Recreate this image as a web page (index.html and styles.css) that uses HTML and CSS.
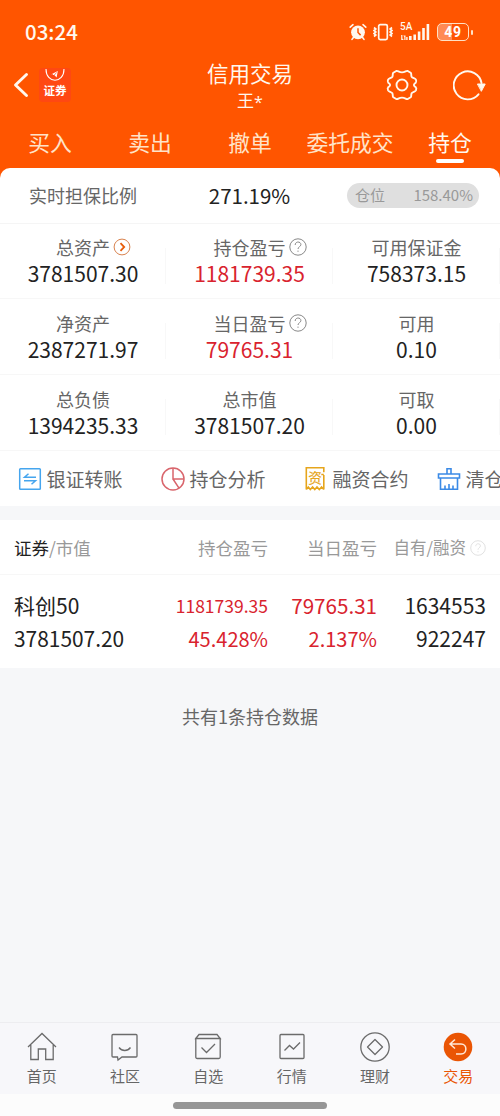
FILE: index.html
```html
<!DOCTYPE html>
<html lang="zh-CN">
<head>
<meta charset="utf-8">
<title>信用交易</title>
<link rel="stylesheet" href="styles.css">
</head>
<body>
<div class="app">
  <header class="top">
    <div class="status">
      <span class="clock">03:24</span>
      <div class="status-icons">
        <svg width="18" height="18" viewBox="0 0 18 18"><circle cx="9" cy="9.3" r="6.900" fill="#fff8ee"/><path d="M1.200 4.200 4 1.700M16.800 4.200 14 1.700M4.600 14.200l-1.600 2.200M13.400 14.200l1.600 2.200" stroke="#fff8ee" stroke-width="1.600" stroke-linecap="round"/><path d="M9 5.300v4.200l2.600 2.600" stroke="#ff5500" stroke-width="1.500" fill="none"/></svg>
        <svg class="vibrate" width="20" height="18" viewBox="0 0 20 18" fill="none" stroke="#fff8ee" stroke-width="1.700"><rect x="5.700" y="1.600" width="8.600" height="15" rx="1.500"/><path d="M1 4.500 2.800 6 1 7.500 2.800 9 1 10.500 2.800 12 1 13.500M19 4.500 17.200 6 19 7.500 17.200 9 19 10.500 17.200 12 19 13.500"/></svg>
        <div class="signal">
          <span class="net">5A</span>
          <svg width="30" height="18" viewBox="0 0 30 18" fill="#fff8ee"><path d="M9 13h2.600v4H9zM13.400 11.500H16v5.500h-2.600zM17.800 8.500h2.600V17h-2.600zM22.200 5h2.600v12h-2.600zM26.600 1h2.600v16h-2.600zM1.200 12h1.200v3.500l1.500 1.500H1.200zM5.500 17H4.300v-3l-1-1.500h2.200zM6.200 14h1.400v3H6.200z"/></svg>
        </div>
        <div class="battery"><span class="charge">49</span></div><i class="battery-tip"></i>
      </div>
    </div>
    <div class="titlebar">
      <div class="title-left">
        <svg width="16" height="26" viewBox="0 0 16 26" fill="none" stroke="#fff8ee" stroke-width="2.900" stroke-linecap="round" stroke-linejoin="round"><path d="M13.500 2.500 2.500 13l11 10.500"/></svg>
        <div class="brand">
          <svg width="20" height="13" viewBox="0 0 20 13" fill="none" stroke="#fff" stroke-width="1.100"><path d="M1 0c0 15 18 15 18 0"/><path d="M6.500 5.300 12.800 2l-1.200 6.500-1.800-2z" fill="#fff" stroke="none"/><path d="m8.300 7.200 3.400-3.800M7 5.200l3 2.600" stroke="#ff4316" stroke-width=".7"/></svg>
          <span class="brand-name">证券</span>
        </div>
      </div>
      <div class="title"><h1 class="title-main">信用交易</h1><span class="title-sub">王<span class="mask">*</span></span></div>
      <div class="title-right">
        <svg width="32" height="32" viewBox="0 0 32 32" fill="none" stroke="#fff8ee" stroke-width="1.900" stroke-linejoin="round"><path d="M10.300 2c1.600-.6 2.400 1.400 5.700 1.400S20.100 1.400 21.700 2l3 1.800c1 .8.200 2.500.9 3.900.9 1.600 3.600 1.500 4.300 3 .5 1.200.5 2.300 0 2.800-.5.800-2 1.200-2 2.500s1.500 1.700 2 2.500c.5.500.5 1.600 0 2.800-.7 1.500-3.400 1.400-4.300 3-.7 1.400.1 3.100-.9 3.900l-3 1.800c-1.600.6-2.400-1.400-5.700-1.400s-4.100 2-5.700 1.400l-3-1.800c-1-.8-.2-2.500-.9-3.900-.9-1.600-3.600-1.500-4.300-3-.5-1.200-.5-2.300 0-2.800.5-.8 2-1.200 2-2.500s-1.500-1.700-2-2.500c-.5-.5-.5-1.600 0-2.800.7-1.500 3.400-1.400 4.300-3 .7-1.400-.1-3.100.9-3.900z"/><circle cx="16" cy="16" r="5.500"/></svg>
        <svg width="34" height="32" viewBox="0 0 34 32" fill="none" stroke="#fff8ee" stroke-width="1.900" stroke-linecap="round"><path d="M25.500 25.300A14 14 0 1 1 28.500 14"/><path d="M24.800 15h7.400L28.500 22z" fill="#fff8ee" stroke-width="1" stroke-linejoin="round"/></svg>
      </div>
    </div>
    <nav class="tabs"><span class="tab">买入</span><span class="tab">卖出</span><span class="tab">撤单</span><span class="tab">委托成交</span><span class="tab tab-active">持仓</span></nav>
  </header>

  <section class="summary">
    <div class="ratio">
      <span class="ratio-label">实时担保比例</span>
      <span class="ratio-value">271.19%</span>
      <div class="position"><span class="position-text">仓位</span><span class="position-text">158.40%</span></div>
    </div>
    <div class="stats">
      <div class="stat"><div class="label">总资产<svg class="hint" width="18" height="18" viewBox="0 0 18 18" fill="none"><circle cx="9" cy="9" r="7.900" stroke="#d9834f"/><path d="m7.500 5.200 3.700 3.800-3.700 3.800" stroke="#e85d0a" stroke-width="1.800"/></svg></div><div class="value">3781507.30</div></div>
      <div class="stat"><div class="label">持仓盈亏<svg class="hint" width="18" height="18" viewBox="0 0 18 18" fill="none" stroke="#888"><circle cx="9" cy="9" r="8.200"/><path d="M6.200 7c0-4 5.700-3.800 5.700-.4C11.900 8.700 9 8.700 9 11M9 12.600v1.200"/></svg></div><div class="value up">1181739.35</div></div>
      <div class="stat"><div class="label">可用保证金</div><div class="value">758373.15</div></div>
    </div>
    <div class="stats">
      <div class="stat"><div class="label">净资产</div><div class="value">2387271.97</div></div>
      <div class="stat"><div class="label">当日盈亏<svg class="hint" width="18" height="18" viewBox="0 0 18 18" fill="none" stroke="#888"><circle cx="9" cy="9" r="8.200"/><path d="M6.200 7c0-4 5.700-3.800 5.700-.4C11.900 8.700 9 8.700 9 11M9 12.600v1.200"/></svg></div><div class="value up">79765.31</div></div>
      <div class="stat"><div class="label">可用</div><div class="value">0.10</div></div>
    </div>
    <div class="stats">
      <div class="stat"><div class="label">总负债</div><div class="value">1394235.33</div></div>
      <div class="stat"><div class="label">总市值</div><div class="value">3781507.20</div></div>
      <div class="stat"><div class="label">可取</div><div class="value">0.00</div></div>
    </div>
    <div class="actions">
      <div class="action"><svg width="24" height="24" viewBox="0 0 24 24" fill="none" stroke="#45a5ee" stroke-width="1.500"><rect x="1.700" y="1.700" width="20.600" height="20.600" rx=".8"/><path d="M18 10.300H6.500l4-3.500M6 13.800h11.500l-4 3.500"/></svg><span>银证转账</span></div>
      <div class="action"><svg width="24" height="24" viewBox="0 0 24 24" fill="none" stroke="#d9656c" stroke-width="1.500"><circle cx="12" cy="12" r="11"/><path d="M12 1v11h11M12 12l6 9.200"/></svg><span>持仓分析</span></div>
      <div class="action"><svg width="24" height="24" viewBox="0 0 24 24" fill="none" stroke="#e6a51c" stroke-width="1.600"><path d="M2.300 22.500V.8h17.500v4.500M19.800 7.500h-2.500M19.800 8v14.500M2.300 22.500l2-2.500 2 2.500 2.300-2.500 2.200 2.500 2.200-2.500 2.300 2.500 2.300-2.500 2.200 2.500"/><text x="4.300" y="15.800" class="contract-mark">资</text></svg><span>融资合约</span></div>
      <div class="action"><svg width="24" height="24" viewBox="0 0 24 24" fill="none" stroke="#3b8ae6" stroke-width="1.600"><path d="M10 7V1.700h4V7M1.500 7h21v4h-21zM3.500 11v11.300h17V11M8 22v-3.500M12 22v-5M16 22v-3.500"/></svg><span>清仓</span></div>
    </div>
  </section>

  <section class="holdings">
    <div class="grid head"><div class="name"><b>证券</b>/市值</div><div>持仓盈亏</div><div>当日盈亏</div><div class="own">自有/融资<svg width="16" height="16" viewBox="0 0 18 18" fill="none" stroke="#ddd"><circle cx="9" cy="9" r="8.200"/><path d="M6.500 7c0-3.700 5.200-3.500 5.200-.4C11.700 8.700 9 8.700 9 11M9 12.600v1.200"/></svg></div></div>
    <div class="holding">
      <div class="grid line"><div class="name">科创50</div><div class="up small">1181739.35</div><div class="up day">79765.31</div><div>1634553</div></div>
      <div class="grid line"><div class="name total">3781507.20</div><div class="up pct">45.428%</div><div class="up pct">2.137%</div><div>922247</div></div>
    </div>
  </section>
  <main class="empty">共有1条持仓数据</main>

  <nav class="dock">
    <div class="dock-item"><svg width="30" height="30" viewBox="0 0 30 30" class="dock-icon"><path d="M1 15 15 1.500 29 15M3.800 13v14.500h7.500V17h7.400v10.500h7.500V13"/></svg><span>首页</span></div>
    <div class="dock-item"><svg width="30" height="30" viewBox="0 0 30 30" class="dock-icon"><path d="M3 2.500h23c.6 0 1 .4 1 1V24c0 .6-.4 1-1 1H12l-4 3-.5-3H3c-.6 0-1-.4-1-1V3.500c0-.6.400-1 1-1zM9 15.500c3 4 8.500 4 11.500 0"/></svg><span>社区</span></div>
    <div class="dock-item"><svg width="30" height="30" viewBox="0 0 30 30" class="dock-icon"><path d="M2.800 6.500 6 2.500h18l3.200 4zM2.800 6.500h24.400V25c0 1-.5 1.500-1.500 1.500H4.300c-1 0-1.500-.5-1.500-1.500zM8.500 15.500l5 5 8.500-8.500"/></svg><span>自选</span></div>
    <div class="dock-item"><svg width="30" height="30" viewBox="0 0 30 30" class="dock-icon"><rect x="3" y="2.500" width="24" height="24" rx="1"/><path d="m7.500 18.500 5-5 4 3.500 6.500-6.500"/></svg><span>行情</span></div>
    <div class="dock-item"><svg width="30" height="30" viewBox="0 0 30 30" class="dock-icon"><circle cx="15" cy="15" r="14.200"/><path d="m15 7.500 7.500 7.500-7.500 7.500L7.500 15z" stroke-linejoin="round"/></svg><span>理财</span></div>
    <div class="dock-item dock-active"><svg width="30" height="30" viewBox="0 0 30 30" fill="none"><circle cx="15" cy="15" r="14.300" fill="#ea5504"/><path d="M12 7.500 7 12l5 4.500M7 12h11c6.500 0 6.500 10 0 10h-5" stroke="#ffe9d8" stroke-width="1.500"/></svg><span>交易</span></div>
  </nav>
  <div class="gesture"><i class="gesture-bar"></i></div>
</div>
</body>
</html>
```
FILE: styles.css
```css
* { box-sizing: border-box; }
body { margin: 0; }
.app { width: 500px; height: 1116px; overflow: hidden; display: flex; flex-direction: column; background: #f6f7f9; color: #222; font-family: "Noto Sans CJK SC", sans-serif; white-space: nowrap; }
svg { flex: none; display: block; }
i { font-style: normal; }

.top { height: 178px; flex: none; background: #ff5500; color: #fff8ee; }
.status { height: 64px; padding: 0 27px 0 25px; display: flex; justify-content: space-between; align-items: center; }
.clock { margin-top: -2px; font: 500 20.500px/24px "Noto Sans CJK SC", sans-serif; }
.status-icons { display: flex; align-items: center; }
.vibrate { margin-left: 6px; }
.signal { position: relative; margin-left: 7px; }
.net { position: absolute; left: 0; top: -2px; font: 500 10px/12px Roboto, sans-serif; }
.battery { width: 32px; height: 18px; margin-left: 7px; border: 1.500px solid #ffe1c4; border-radius: 5px; background: linear-gradient(90deg, #ff8a55 48%, transparent 48%); display: flex; align-items: center; justify-content: center; }
.charge { font: 700 14px/16px Roboto, sans-serif; letter-spacing: .6px; color: #fff; }
.battery-tip { width: 2px; height: 5px; margin-left: 2px; border-radius: 1px; background: #ffe1c4; }

.titlebar { height: 54px; padding: 0 13px; display: grid; grid-template-columns: 1fr auto 1fr; }
.title-left, .title-right { height: 42px; display: flex; align-items: center; }
.title-right { justify-content: flex-end; gap: 35px; }
.brand { width: 32px; height: 34px; margin-left: 10px; padding-top: 1px; border-radius: 4px; background: #ff4812; display: flex; flex-direction: column; align-items: center; }
.brand-name { font: 700 11.500px/16px "Noto Sans CJK SC", sans-serif; color: #fff; }
.title { display: flex; flex-direction: column; align-items: center; }
.title-main { margin: -5px 0 0; font-size: 21.500px; line-height: 28px; font-weight: 400; }
.title-sub { display: flex; font-size: 17px; line-height: 26px; }
.mask { padding-top: 2px; font-family: "Open Sans", sans-serif; font-size: 16px; }

.tabs { height: 50px; display: grid; grid-template-columns: repeat(5, 100px); text-align: center; }
.tab { font-size: 21.800px; line-height: 47px; color: #ffe3c8; }
.tab-active { color: #fff8ee; display: flex; flex-direction: column; align-items: center; }
.tab-active::after { content: ""; width: 28px; height: 4px; margin-top: -6px; border-radius: 2px; background: #fff; }

.summary { flex: none; margin-top: -10px; background: #fff; border-radius: 10px 10px 0 0; }
.ratio { height: 56px; padding-right: 21px; display: grid; grid-template-columns: 166px 167px 1fr; align-items: center; text-align: center; border-bottom: 1px solid #f5f5f5; }
.ratio-label { margin-top: -1px; font-size: 18px; color: #666; }
.ratio-value { margin-top: -2px; font-size: 20.500px; }
.position { height: 25px; margin-left: 14px; padding: 0 6px 0 8px; border-radius: 13px; background: #dfdfdf; color: #999; font-size: 15px; display: flex; align-items: center; justify-content: space-between; }
.position-text { margin-top: -2px; }
.stats { height: 75px; display: grid; grid-template-columns: 166px 167px 167px; border-bottom: 1px solid #f7f7f7; }
.stats + .stats { height: 76px; }
.stat { padding-top: 10px; display: flex; flex-direction: column; align-items: center; background: linear-gradient(#f8f8f8, #f8f8f8) right 24px / 1px 36px no-repeat; }
.stats + .stats .stat { padding-top: 11px; }
.label { position: relative; font-size: 18px; line-height: 26px; color: #666; }
.hint { position: absolute; left: calc(100% + 3px); top: 4px; }
.value { font-size: 21px; line-height: 27px; }
.up { color: #d9232e; }
.actions { height: 55px; padding-left: 18px; display: flex; align-items: center; overflow: hidden; font-size: 19px; color: #666; }
.action { display: flex; align-items: center; gap: 4.500px; flex: none; width: 143px; }
.action + .action + .action { width: 133px; }
.contract-mark { font-size: 13.500px; fill: #e6a51c; stroke: #e6a51c; stroke-width: .2px; }

.holdings { flex: none; margin-top: 14px; background: #fff; }
.grid { display: grid; grid-template-columns: 1fr 128px 109px 109px; padding: 0 14px; text-align: right; }
.name { text-align: left; }
.head { height: 55px; line-height: 55px; font-size: 17.500px; color: #999; border-bottom: 1px solid #f7f7f7; }
.head b { font-weight: 400; color: #222; }
.own { display: flex; align-items: center; justify-content: flex-end; gap: 4px; font-size: 16.500px; }
.holding { height: 93px; padding-top: 14px; }
.line { font-size: 21px; line-height: 33px; }
.total { font-size: 20.900px; }
.day { font-size: 20.600px; }
.small { font-size: 17.500px; }
.pct { font-size: 20px; }
.empty { flex: 1; padding-top: 34px; text-align: center; font-size: 18px; line-height: 28px; color: #666; }

.dock { height: 72px; flex: none; display: grid; grid-template-columns: repeat(6, 1fr); border-top: 1px solid #ededf0; background: #f7f7fa; }
.dock-item { padding-top: 9px; display: flex; flex-direction: column; align-items: center; font-size: 15px; line-height: 28px; color: #666; }
.dock-icon { fill: none; stroke: #6b6b6b; stroke-width: 1.300; }
.dock-active { color: #ea5504; }
.gesture { height: 22px; flex: none; display: flex; justify-content: center; align-items: center; background: #fcfcfc; }
.gesture-bar { width: 154px; height: 7px; border-radius: 4px; background: #969696; }
```
